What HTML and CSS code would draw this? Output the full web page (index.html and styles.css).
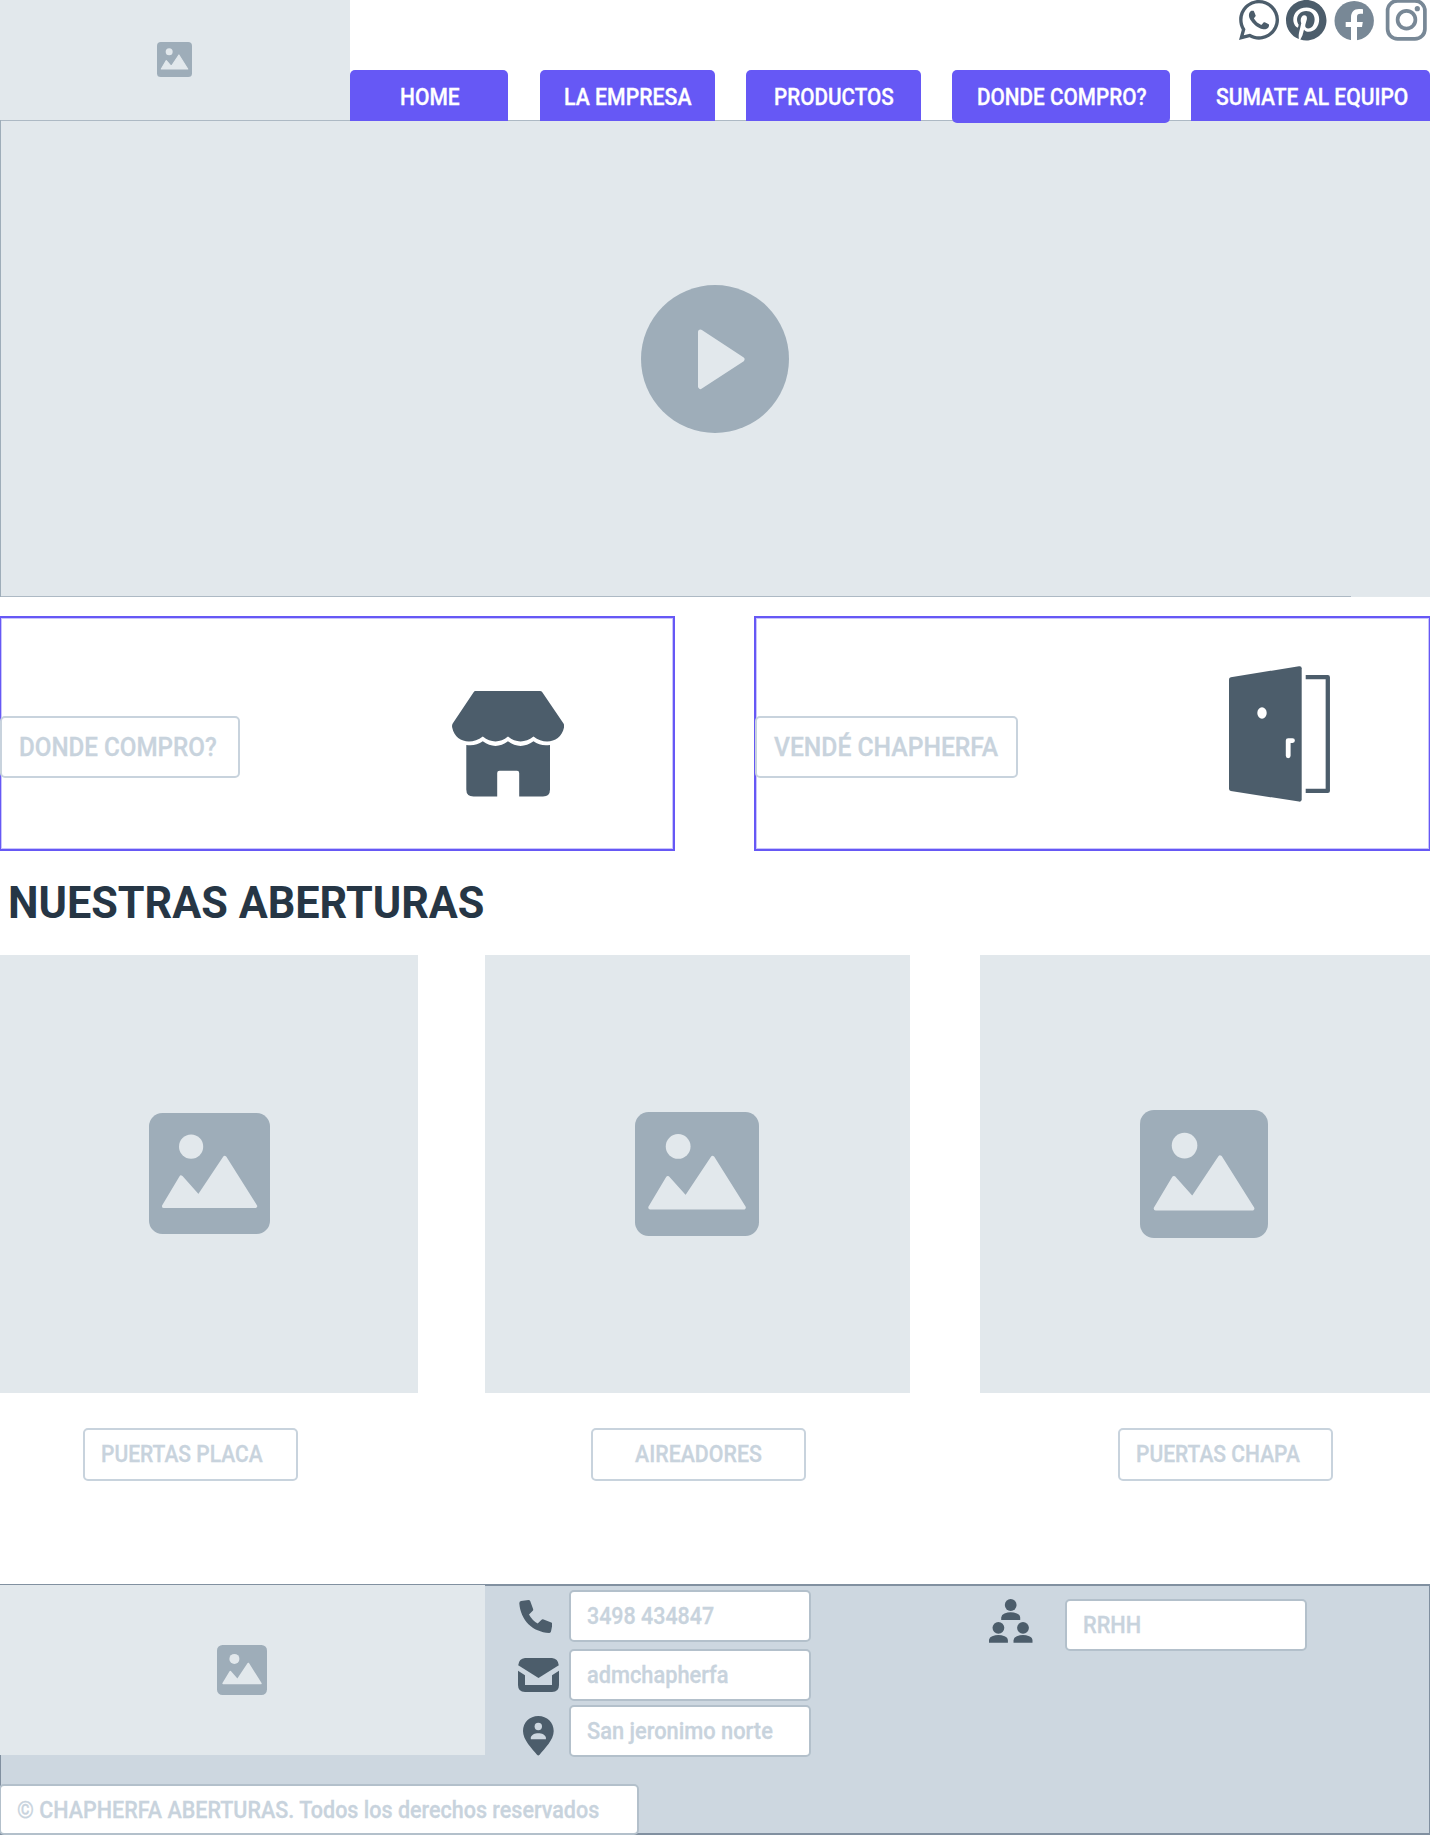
FILE: index.html
```html
<!DOCTYPE html>
<html lang="es">
<head>
<meta charset="utf-8">
<title>Chapherfa Aberturas</title>
<link rel="stylesheet" href="styles.css">
</head>
<body>
<svg class="defs" width="0" height="0">
  <symbol id="picture" viewBox="0 0 100 100">
    <rect width="100" height="100" rx="11" fill="#9eadb9"/>
    <circle cx="34.8" cy="27.8" r="10" fill="#e2e8ec"/>
    <path d="M12.3 77L26.5 53.2L41 69.5L62.6 37L87.8 77Z" fill="#e2e8ec" stroke="#e2e8ec" stroke-width="3.2" stroke-linejoin="round"/>
  </symbol>
</svg>

<header class="header">
  <div class="logo"><svg class="logo-icon"><use href="#picture"/></svg></div>
  <div class="header-main">
    <div class="social">
      <svg class="whatsapp" viewBox="0 32 448 448" preserveAspectRatio="none"><path fill="#4c5d6b" d="M380.9 97.1C339 55.1 283.2 32 223.9 32c-122.4 0-222 99.6-222 222 0 39.1 10.2 77.3 29.6 111L0 480l117.7-30.9c32.4 17.7 68.9 27 106.1 27h.1c122.3 0 224.1-99.6 224.1-222 0-59.3-25.2-115-67.1-157zm-157 341.6c-33.2 0-65.7-8.9-94-25.7l-6.7-4-69.8 18.3L72 359.2l-4.4-7c-18.5-29.4-28.2-63.3-28.2-98.2 0-101.7 82.8-184.5 184.6-184.5 49.3 0 95.6 19.2 130.4 54.1 34.8 34.9 56.2 81.2 56.1 130.5 0 101.8-84.9 184.6-186.6 184.6zm101.2-138.2c-5.5-2.8-32.8-16.2-37.9-18-5.1-1.9-8.8-2.8-12.5 2.8-3.7 5.6-14.3 18-17.6 21.8-3.2 3.7-6.5 4.2-12 1.4-32.6-16.3-54-29.1-75.5-66-5.7-9.8 5.7-9.1 16.3-30.3 1.8-3.7.9-6.9-.5-9.7-1.4-2.8-12.5-30.1-17.1-41.2-4.5-10.8-9.1-9.3-12.5-9.5-3.2-.2-6.9-.2-10.6-.2-3.7 0-9.7 1.4-14.8 6.9-5.1 5.6-19.4 19-19.4 46.3 0 27.3 19.9 53.7 22.6 57.4 2.8 3.7 39.1 59.7 94.8 83.8 35.2 15.2 49 16.5 66.6 13.9 10.7-1.6 32.8-13.4 37.4-26.4 4.6-13 4.6-24.1 3.2-26.4-1.3-2.5-5-3.9-10.5-6.6z"/></svg>
      <svg class="pinterest" viewBox="0 8 496 496"><path fill="#4c5d6b" d="M496 256c0 137-111 248-248 248-25.6 0-50.2-3.9-73.4-11.1 10.1-16.5 25.2-43.5 30.8-65 3-11.6 15.4-59 15.4-59 8.1 15.4 31.7 28.5 56.8 28.5 74.8 0 128.7-68.8 128.7-154.3 0-81.9-66.9-143.2-152.9-143.2-107 0-163.9 71.8-163.9 150.1 0 36.4 19.4 81.7 50.3 96.1 4.7 2.2 7.2 1.2 8.3-3.3.8-3.4 5-20.3 6.9-28.1.6-2.5.3-4.7-1.7-7.1-10.1-12.5-18.3-35.3-18.3-56.6 0-54.7 41.4-107.6 112-107.6 60.9 0 103.6 41.5 103.6 100.9 0 67.1-33.9 113.6-78 113.6-24.3 0-42.6-20.1-36.7-44.8 7-29.5 20.5-61.3 20.5-82.6 0-19-10.2-34.9-31.4-34.9-24.9 0-44.9 25.7-44.9 60.2 0 22 7.4 36.8 7.4 36.8s-24.5 103.8-29 123.2c-5 21.4-3 51.6-.9 71.2C65.4 450.9 0 361.1 0 256 0 119 111 8 248 8s248 111 248 248z"/></svg>
      <svg class="facebook" viewBox="0 0 41 42"><circle cx="20.2" cy="20.8" r="19.7" fill="#788896"/><path fill="#fff" d="M17 42V27h-5.3v-5H17v-4.6c0-5.4 2.8-8.5 8-8.5 1.6 0 3 .1 4 .3v4.6h-2.6c-2.5 0-3.4 1.2-3.4 3.2V22h5.8l-.8 5h-5v15z"/></svg>
      <svg class="instagram" viewBox="0 0 43 42"><g fill="none" stroke="#788896" stroke-width="3.7"><rect x="2.6" y=".8" width="37.3" height="38.1" rx="10"/><circle cx="21.5" cy="19.7" r="8.9"/></g><circle cx="32.3" cy="8.7" r="2.6" fill="#788896"/></svg>
    </div>
    <nav class="nav">
      <a class="nav-home"><span class="t t-home">HOME</span></a>
      <a class="nav-empresa"><span class="t t-empresa">LA EMPRESA</span></a>
      <a class="nav-productos"><span class="t t-productos">PRODUCTOS</span></a>
      <a class="nav-donde"><span class="t t-donde">DONDE COMPRO?</span></a>
      <a class="nav-sumate"><span class="t t-sumate">SUMATE AL EQUIPO</span></a>
    </nav>
  </div>
</header>

<section class="hero">
  <svg class="play" viewBox="0 0 148 148"><circle cx="74" cy="74" r="74" fill="#9eadb9"/><path d="M59.5 47L101 74.3L59.5 101.5Z" fill="#e2e8ec" stroke="#e2e8ec" stroke-width="5" stroke-linejoin="round"/></svg>
</section>

<section class="promos">
  <div class="promo promo-donde">
    <div class="promo-label promo-label-donde"><span class="t t-promo-donde">DONDE COMPRO?</span></div>
    <svg class="shop" viewBox="0 0 112 106" fill="#4c5d6b"><path d="M23.5 0H88Q89.5 0 90.3 1.2L111.5 32.5Q112.5 34.2 112 36.5C109 51 93 54.5 81.5 45.5C73 52 64 52 56 45.5C48 52 39 52 30.8 45.5C19 54.5 3 51 .2 36.5Q-.3 34.2 .7 32.5L21.6 1.2Q22.3 0 23.5 0Z"/><path d="M14.3 54Q23.5 55.5 30.8 50.3C39 56.5 48 56.5 56 50.3C64 56.5 73 56.5 81.5 50.3Q88.5 55.5 98 54V98.5Q98 105.5 91 105.5H67.2V82Q67.2 79.8 65 79.8H47.5Q45.2 79.8 45.2 82V105.5H21.5Q14.3 105.5 14.3 98.5Z"/></svg>
  </div>
  <div class="promo promo-vende">
    <div class="promo-label promo-label-vende"><span class="t t-vende">VENDÉ CHAPHERFA</span></div>
    <svg class="door" viewBox="0 0 102 136"><path fill="#4c5d6b" d="M1.8 11.3L70 .2Q72.7-.2 72.7 2.3V133.5Q72.7 136 70 135.6L1.8 125Q0 124.6 0 122.8V13.5Q0 11.6 1.8 11.3Z"/><path d="M76.7 11.2H98.8V124.9H76.7" fill="none" stroke="#4c5d6b" stroke-width="4.3" stroke-linejoin="round"/><ellipse cx="33" cy="47" rx="4.7" ry="5.7" fill="#fff"/><path d="M63.5 74.6H59.2V89.8" fill="none" stroke="#fff" stroke-width="4.8" stroke-linecap="round" stroke-linejoin="round"/></svg>
  </div>
</section>

<h1 class="title"><span class="t t-title">NUESTRAS ABERTURAS</span></h1>

<section class="products">
  <article class="product product-placa">
    <div class="product-image"><svg><use href="#picture"/></svg></div>
    <div class="product-label"><span class="t t-placa">PUERTAS PLACA</span></div>
  </article>
  <article class="product product-aireadores">
    <div class="product-image"><svg><use href="#picture"/></svg></div>
    <div class="product-label"><span class="t t-aireadores">AIREADORES</span></div>
  </article>
  <article class="product product-chapa">
    <div class="product-image"><svg><use href="#picture"/></svg></div>
    <div class="product-label"><span class="t t-chapa">PUERTAS CHAPA</span></div>
  </article>
</section>

<footer class="footer">
  <div class="footer-top">
    <div class="footer-logo"><svg><use href="#picture"/></svg></div>
    <div class="contact">
      <div class="contact-row">
        <svg class="phone" viewBox="0 0 33.5 33.5"><path fill="#4c5d6b" d="M2 .9L9.5 0Q10.7 0 11.2 1L14.1 9Q14.5 10.2 13.5 11.1L10 14.4Q13.2 20.3 18.7 23.6L22.3 20Q23.3 19 24.6 19.5L32.3 22.4Q33.6 23 33.4 24.3L32 31.6Q31.7 33 30.3 33C13.5 31.9 1.7 20.5 .3 3.2Q.3 1.3 2 .9Z"/></svg>
        <div class="field"><span class="t t-tel">3498 434847</span></div>
      </div>
      <div class="contact-row contact-row-mail">
        <svg class="mail" viewBox="0 0 41 34" fill="#4c5d6b"><path d="M7 0H34Q40 .6 40.8 7.2L20.5 20L.2 7.2Q1 .6 7 0Z"/><path d="M0 12.700L7 17.2V27H34V17.2L41 12.7V27Q41 34 34 34H7Q0 34 0 27Z"/></svg>
        <div class="field"><span class="t t-mail">admchapherfa</span></div>
      </div>
      <div class="contact-row contact-row-pin">
        <svg class="pin" viewBox="0 0 31 40"><path fill="#4c5d6b" d="M15.3 0C6.5 0 0 6.5 0 15C0 24 9 32.5 14 38.8Q15.3 40.2 16.6 38.8C21.6 32.5 30.7 24 30.7 15C30.7 6.5 24.1 0 15.3 0Z"/><circle cx="15.3" cy="10.5" r="3.7" fill="#cdd7e0"/><path fill="#cdd7e0" d="M7.8 23.3V21.5C9 15.7 21.6 15.7 22.9 21.5V23.3Z"/></svg>
        <div class="field"><span class="t t-dir">San jeronimo norte</span></div>
      </div>
    </div>
    <div class="staff">
      <svg class="people" viewBox="0 0 44 44" fill="#4c5d6b"><g id="person"><circle cx="21.7" cy="6" r="5.9"/><path d="M12.2 21V18.5Q12.5 15.5 15.5 14.5Q21.7 12 27.9 14.5Q31 15.5 31.2 18.5V21Z"/></g><use href="#person" x="-12.3" y="22.8"/><use href="#person" x="12.3" y="22.8"/></svg>
      <div class="field"><span class="t t-rrhh">RRHH</span></div>
    </div>
  </div>
  <div class="copyright"><span class="t t-copy">© CHAPHERFA ABERTURAS. Todos los derechos reservados</span></div>
</footer>
</body>
</html>
```
FILE: styles.css
```css
* { box-sizing: border-box; }
body {
  margin: 0;
  width: 1430px;
  height: 1836px;
  overflow: hidden;
  background: #fff;
  font-family: Roboto, "Liberation Sans", sans-serif;
  font-weight: 500;
  font-size: 23px;
  color: #c8d3dd;
}
svg { display: block; flex: none; }
.defs { position: absolute; }

/* Labels are slightly condensed */
.t { display: inline-block; white-space: nowrap; transform-origin: 0 50%; -webkit-text-stroke: .3px currentColor; }
.t-home { transform: scaleX(.915); }
.t-empresa { transform: scaleX(.924); }
.t-productos { transform: scaleX(.9); }
.t-donde { transform: scaleX(.902); }
.t-sumate { transform: scaleX(.915); }
.t-promo-donde { transform: scaleX(.948); }
.t-vende { transform: scaleX(.967); }
.t-title { transform: scaleX(.993); -webkit-text-stroke: 0; }
.t-placa { transform: scaleX(.914); }
.t-aireadores { transform: scaleX(.928); }
.t-chapa { transform: scaleX(.914); }
.t-tel { transform: scaleX(.932); }
.t-mail { transform: scaleX(.947); }
.t-dir { transform: scaleX(.949); }
.t-rrhh { transform: scaleX(.945); }
.t-copy { transform: scaleX(.936); }

/* Header */
.header { display: flex; height: 120px; }
.logo { flex: none; width: 349.5px; padding-bottom: 1px; background: #e2e8ec; display: grid; place-items: center; }
.logo-icon { width: 35px; height: 35px; }
.header-main { flex: 1; display: flex; flex-direction: column; justify-content: space-between; }
.social { display: flex; justify-content: flex-end; height: 42px; padding-right: 2px; }
.whatsapp { width: 40px; height: 40px; margin-right: 7px; }
.pinterest { width: 40.5px; height: 40.5px; margin-right: 7.5px; }
.facebook { width: 41px; height: 42px; margin-right: 10px; }
.instagram { width: 43px; height: 42px; }
.nav { display: flex; align-items: flex-start; height: 50px; color: #fff; }
.nav a { position: relative; height: 50.5px; line-height: 56px; background: #6658f5; border-radius: 5px 5px 0 0; }
.nav-home { width: 158.5px; margin-right: 32px; padding-left: 50px; }
.nav-empresa { width: 174.5px; margin-right: 31.5px; padding-left: 23.5px; }
.nav-productos { width: 174.5px; margin-right: 31.5px; padding-left: 27.5px; }
.nav .nav-donde { width: 217.5px; height: 52.5px; margin-right: 21.5px; padding-left: 24.5px; border-radius: 5px; }
.nav-sumate { width: 239px; padding-left: 24.5px; }

/* Hero */
.hero {
  height: 477px;
  padding-right: 2px;
  border-left: 1px solid #9eadb9;
  display: grid;
  place-items: center;
  background-color: #e2e8ec;
  background-image: linear-gradient(#adb9c4, #adb9c4), linear-gradient(#adb9c4, #adb9c4);
  background-size: 1350px 1px;
  background-position: 0 0, 0 100%;
  background-repeat: no-repeat;
}
.play { width: 148px; height: 148px; }

/* Promo cards */
.promos { display: flex; justify-content: space-between; margin: 19px 0 0 -1px; width: 1432px; }
.promo { height: 235px; border: 2px solid #6658f5; box-shadow: inset 0 0 0 1px #c9c4fc; display: flex; align-items: flex-start; }
.promo-donde { width: 676px; }
.promo-vende { width: 677px; }
.promo-label { flex: none; height: 62px; margin: 98px 0 0 -1px; border: 2px solid #c8d3dd; border-radius: 5px; line-height: 58px; font-size: 25.5px; background: #fff; }
.promo-label-donde { width: 240px; padding-left: 17px; }
.promo-label-vende { width: 263px; padding-left: 17px; }
.shop { width: 112px; height: 106px; margin: 73px 0 0 211.5px; }
.door { width: 102px; height: 136px; margin: 48px 0 0 211px; }

/* Title */
.title { margin: 0; height: 104px; padding: 16px 0 0 8px; font-size: 43.5px; line-height: 74px; font-weight: 700; color: #263645; }

/* Products */
.products { display: flex; justify-content: space-between; height: 629px; width: 1429.5px; }
.product { display: flex; flex-direction: column; }
.product-placa { width: 418px; }
.product-aireadores { width: 425px; margin-right: 3px; }
.product-chapa { width: 449.5px; }
.product-image { height: 438px; background: #e2e8ec; display: grid; place-items: center; }
.product-placa .product-image svg { width: 121px; height: 121px; margin-bottom: 1px; }
.product-aireadores .product-image svg { width: 124px; height: 124px; margin-right: 1px; }
.product-chapa .product-image svg { width: 128px; height: 128px; margin-right: 1px; }
.product-label { width: 215px; height: 53px; margin-top: 35px; border: 2px solid #c8d3dd; border-radius: 5px; line-height: 50px; padding-left: 15.5px; }
.product-placa .product-label { margin-left: 83px; }
.product-aireadores .product-label { margin-left: 105.5px; padding-left: 42px; }
.product-chapa .product-label { margin-left: 138px; }

/* Footer */
.footer { height: 251px; background: #cdd7e0; border: 2px solid #8190a0; border-left-width: 1px; border-right-width: 1px; }
.footer-top { display: flex; height: 170px; }
.footer-logo { flex: none; width: 485px; height: 170px; margin: -1px 0 0 -1px; padding: 0 2px 1px 0; background: #e2e8ec; display: grid; place-items: center; }
.footer-logo svg { width: 50px; height: 50px; }
.contact { flex: none; width: 326px; padding-top: 4px; }
.contact-row { display: flex; align-items: flex-start; justify-content: space-between; padding-left: 32.5px; }
.contact-row-mail { margin-top: 7px; }
.contact-row-pin { margin-top: 4px; }
.field { width: 242px; height: 52px; border: 2px solid #b3c0cb; border-radius: 5px; background: #fff; line-height: 49px; padding-left: 16px; }
.phone { width: 33.5px; height: 33.5px; margin-top: 9.5px; margin-left: 1px; }
.mail { width: 41px; height: 34px; margin-top: 9px; }
.pin { width: 31px; height: 40px; margin-top: 10.5px; margin-left: 5px; }
.staff { display: flex; align-items: flex-start; margin-left: 178px; padding-top: 13px; }
.people { width: 44px; height: 44px; margin-right: 31.5px; }
.copyright { width: 639.5px; height: 51px; margin: 28px 0 0 -2px; border: 2px solid #b3c0cb; border-radius: 5px; background: #fff; line-height: 49px; padding-left: 16px; }
```
